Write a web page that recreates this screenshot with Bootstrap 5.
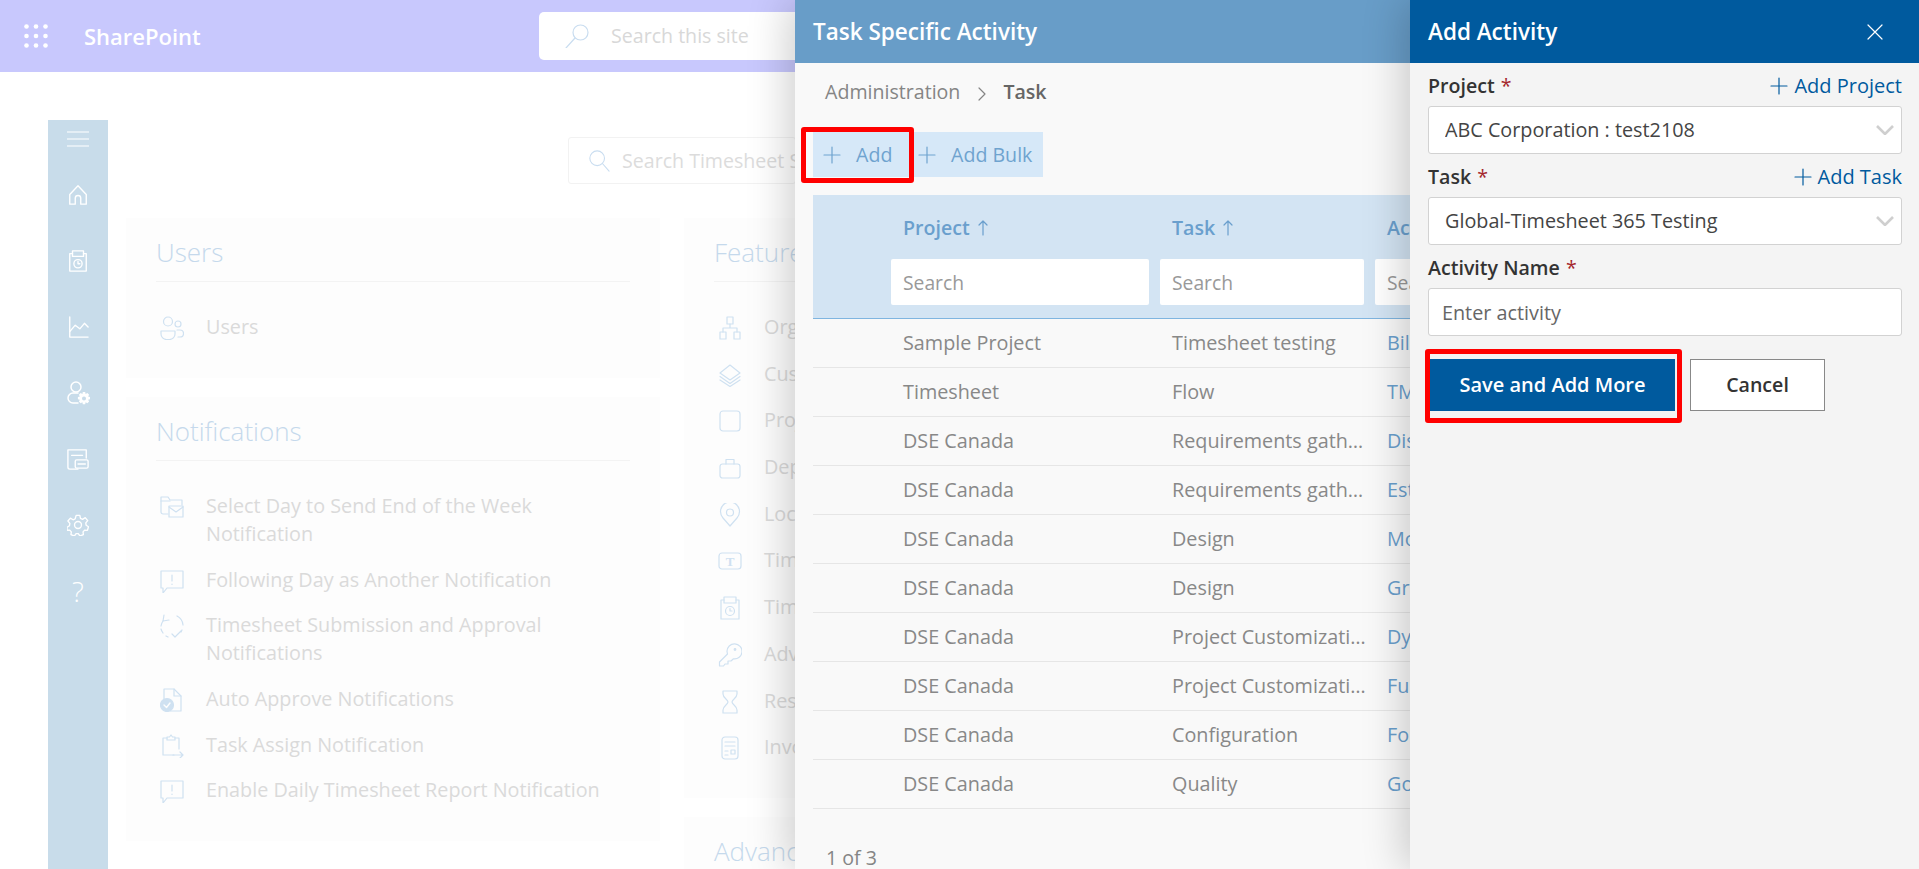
<!doctype html>
<html lang="en">
<head>
    <meta charset="utf-8">
    <meta name="viewport" content="width=device-width, initial-scale=1">
    <title>Task Specific Activity</title>
    <link href="https://cdn.jsdelivr.net/npm/bootstrap@5.3.3/dist/css/bootstrap.min.css" rel="stylesheet">
    <style>
        html, body { height: 869px; overflow: hidden; }
        body { font-family: "Open Sans", "Liberation Sans", sans-serif; font-size: 19.6px; background: #fff; position: relative; }
        svg.ico { fill: none; stroke: currentColor; stroke-width: 1.2; stroke-linecap: round; stroke-linejoin: round; flex: none; }

        /* background page */
        .top-bar { height: 72px; background: #c8c8fd; padding: 0; flex-wrap: nowrap; justify-content: flex-start; }
        .waffle { width: 24px; height: 24px; margin-left: 24px; fill: #fff; }
        .brand-name { color: #fff; font-size: 22px; font-weight: 600; margin-left: 36px; width: 455px; }
        .site-search { width: 400px; height: 48px; background: #fff; border-radius: 5px; color: #c9ddf0; padding-left: 26px; gap: 22px; }
        .site-search span { color: #d8d8d8; font-size: 19.6px; }
        .page-body { margin-left: 48px; height: 797px; overflow: hidden; }
        .side-rail { width: 60px; height: 749px; margin-top: 48px; background: #c8dcea; color: #fff; flex: none; }
        .rail-menu { height: 38px; margin-bottom: 4px; }
        .rail-item { height: 66px; }
        .rail-item svg.ico { stroke-width: 1.5; }
        .rail-q { font-size: 28px; font-weight: 300; line-height: 1; }
        .page-main { padding: 65px 0 0 18px; }
        .tool-search { width: 228px; height: 47px; margin-left: 442px; border: 1px solid #f2f2f2; border-radius: 3px; color: #c9ddf0; padding-left: 19px; gap: 12px; overflow: hidden; }
        .tool-search span { color: #dcdcdc; font-size: 19.6px; white-space: nowrap; }
        .set-cols { display: grid; grid-template-columns: 534px 534px; column-gap: 24px; margin-top: 34px; }
        .set-col { display: flex; flex-direction: column; gap: 19px; }
        .set-card { background: #fdfdfd; padding: 17px 30px 37px; }
        .set-title { font-size: 26px; font-weight: 300; line-height: 34px; color: #c5d9ec; margin: 0; padding-bottom: 12px; border-bottom: 1px solid #f3f3f3; }
        .set-list { margin-top: 31px; display: flex; flex-direction: column; gap: 17.7px; }
        .set-list.tight { gap: 18.7px; }
        .set-row { display: flex; color: #dadada; line-height: 28px; font-size: 19.8px; }
        .set-ico { width: 50px; padding-left: 4px; flex: none; color: #cfe1f1; }
        .set-ico svg { display: block; margin-top: 3px; }

        /* sliding panels */
        .panel-one, .panel-two { position: absolute; top: 0; bottom: 0; right: 0; overflow: hidden; box-shadow: -6px 0 40px rgba(0, 0, 0, .2); }
        .panel-one { left: 795px; background: #f9f9f9; }
        .panel-two { left: 1410px; background: #f4f4f4; }
        .panel-head { height: 63px; color: #fff; font-size: 22.5px; font-weight: 600; }
        .panel-one .panel-head { background: #689dc8; padding-left: 18px; }
        .panel-two .panel-head { background: #005a9e; padding: 0 36px 0 18px; }

        .crumbs { padding: 16px 0 0 30px; height: 69px; color: #858585; gap: 16.5px; line-height: 26px; }
        .crumbs b { font-weight: 600; color: #666; }
        .act-bar { margin-left: 18px; height: 45px; }
        .act-btn { height: 45px; border: 0; border-radius: 0; background: #d6e8f8; color: #6fa3cf; padding: 0 9px 0 10px; gap: 15px; font-size: 19.6px; white-space: nowrap; }
        .act-btn:hover { background: #d6e8f8; color: #6fa3cf; }
        .act-one { width: 89px; }
        .act-two { width: 141px; }
        .mark-box { position: absolute; border: 5px solid #f00; border-radius: 3px; pointer-events: none; }
        .mark-add { top: -5px; bottom: -6px; left: -12px; right: -12px; }
        .mark-save { top: -10px; bottom: -12px; left: -5px; right: -7px; }

        .task-table { width: 740px; margin: 18px 0 0 18px; table-layout: fixed; --bs-table-bg: transparent; color: #888; }
        .task-table thead th { background: #d3e4f3; border-bottom: 1px solid #7fb5e0; padding: 20px 11px 13px 0; color: #6a9fcd; font-weight: 600; font-size: 19.6px; line-height: 26px; }
        .task-table .th-label { padding-left: 12px; gap: 8px; white-space: nowrap; }
        .task-table .form-control { height: 46px; margin-top: 18px; border: 0; border-radius: 2px; padding: 0 12px; font-size: 19.3px; font-weight: 400; background: #fff; }
        .task-table .form-control::placeholder { color: #999; }
        .task-table tbody td { height: 49px; padding: 0 5px 0 12px; border-bottom: 1px solid #e6e6e6; vertical-align: middle; font-size: 19.8px; color: #888; white-space: nowrap; overflow: hidden; text-overflow: ellipsis; }
        .task-table tbody td.act-cell { color: #6a9fcd; }
        .page-count { margin: 38px 0 0 31px; color: #858585; line-height: 22px; }

        .close-x { color: #fff; }
        .add-form { padding: 11px 17px 0 18px; }
        .fld-top { height: 24px; line-height: 24px; margin-bottom: 8px; }
        .fld-label { color: #333; font-weight: 600; font-size: 19.6px; margin: 0; }
        .fld-star { color: #a4262c; font-weight: 400; margin-left: 1px; }
        .fld-add { color: #005a9e; text-decoration: none; font-size: 20px; gap: 6px; }
        .fld-box { height: 48px; border: 1px solid #d2d2d2; border-radius: 3px; font-size: 19.8px; color: #444; background-color: #fff; margin-bottom: 11px; box-shadow: none; }
        .form-select.fld-box { padding: 0 32px 0 16px; background-position: right 7px center; background-size: 18px 10px;
            background-image: url("data:image/svg+xml,%3csvg xmlns='http://www.w3.org/2000/svg' viewBox='0 0 18 10'%3e%3cpath fill='none' stroke='%23cfcfcf' stroke-width='2.6' d='M1 1l8 8 8-8'/%3e%3c/svg%3e"); }
        .form-control.fld-box { padding: 0 13px; }
        .form-control.fld-box::placeholder { color: #666; }
        .form-actions { margin: 23px 0 0 2px; gap: 15px; }
        .save-btn { width: 245px; height: 52px; background: #005a9e; border: 0; border-radius: 0; color: #fff; font-weight: 600; font-size: 20px; white-space: nowrap; padding: 0; }
        .save-btn:hover { background: #005a9e; color: #fff; }
        .cancel-btn { width: 135px; height: 52px; background: #fff; border: 1px solid #888; border-radius: 0; color: #333; font-weight: 600; font-size: 19.6px; margin-left: 0; }
        .cancel-btn:hover { background: #fff; color: #333; border-color: #888; }
    </style>
</head>
<body>
    <svg width="0" height="0" class="position-absolute">
        <symbol id="i-users" viewBox="0 0 24 24"><circle cx="8" cy="5.500" r="4.500"/><circle cx="18" cy="8" r="3"/><path d="M1 15h14v3a5.500 5.500 0 0 1-5.500 5.500h-3A5.500 5.500 0 0 1 1 18z"/><path d="M17 14h3a3.500 3.500 0 0 1 0 7h-2"/></symbol>
        <symbol id="i-org" viewBox="0 0 24 24"><rect x="9" y="1" width="6" height="7"/><rect x="2" y="16" width="6" height="7"/><rect x="16" y="16" width="6" height="7"/><path d="M12 8v4M5 16v-4h14v4"/></symbol>
        <symbol id="i-layers" viewBox="0 0 24 24"><path d="M12 2l10 8-10 7-10-7z"/><path d="M2 13.500l10 7 10-7M2 17l10 6.500L22 17"/></symbol>
        <symbol id="i-square" viewBox="0 0 24 24"><rect x="2" y="2" width="20" height="20" rx="3"/></symbol>
        <symbol id="i-case" viewBox="0 0 24 24"><rect x="2" y="8" width="20" height="14" rx="2.500"/><path d="M8 8V3.500h8V8"/></symbol>
        <symbol id="i-pin" viewBox="0 0 24 24"><path d="M12 23l-7-8a9.500 9.500 0 1 1 14 0z"/><circle cx="12" cy="9.500" r="3.500"/></symbol>
        <symbol id="i-sheet" viewBox="0 0 24 24"><path d="M6 4H3v19h18V4h-3"/><rect x="6" y="1" width="12" height="6"/><circle cx="12" cy="15" r="4.500"/><path d="M12 12.500V15h2"/></symbol>
        <symbol id="i-key" viewBox="0 0 24 24"><path d="M9 8.500a7.500 7.500 0 1 1 6.500 7.300L13 18h-3v3H7l-1.500 2H1.500v-4L9.500 11z"/><circle cx="17" cy="6.500" r=".8"/></symbol>
        <symbol id="i-hour" viewBox="0 0 24 24"><path d="M5 1h14v3c0 4-5 5.500-5 8s5 4 5 8v3H5v-3c0-4 5-5.500 5-8S5 8 5 4z"/></symbol>
        <symbol id="i-bill" viewBox="0 0 24 24"><rect x="4" y="1" width="16" height="22" rx="3"/><path d="M7 6h10M7 10h10M7 15h3M7 19h3"/><rect x="13" y="14" width="4" height="4"/></symbol>
        <symbol id="i-folder" viewBox="0 0 24 24"><path d="M8 19H3a2 2 0 0 1-2-2V2h7l2 3h12v5"/><path d="M1 6h9"/><rect x="9" y="11" width="14" height="11"/><path d="M9 12l7 5 7-5"/></symbol>
        <symbol id="i-alert" viewBox="0 0 24 24"><path d="M1 2h22v17H7l-4 5v-5H1z"/><path d="M12 6v6M12 15v.5"/></symbol>
        <symbol id="i-cycle" viewBox="0 0 24 24"><path d="M4 1l-1 6 6-1"/><path d="M3 7a11 11 0 0 0-2 5"/><path d="M1 15a11 11 0 0 0 2 4M6 22l2 1"/><path d="M17 2a11 11 0 0 1 6 9M22 16l-1 2"/><path d="M12 21l3 3 6-6" transform="translate(0 -1)"/></symbol>
        <symbol id="i-doc" viewBox="0 0 24 24"><path d="M4 12V1h10l7 7v15H10"/><path d="M14 1v7h7"/><circle cx="7" cy="17" r="6.500" fill="currentColor"/><path d="M4 17l2.500 2.500L10 15" stroke="#fdfdfd" stroke-width="1.400"/></symbol>
        <symbol id="i-clip" viewBox="0 0 24 24"><path d="M14 21H3V4h4M15 4h4v11"/><path d="M7 6V3h2.500L11 1l1.500 2H15v3z"/><path d="M13 21h10M20 18l3 3-3 3"/></symbol>
        <symbol id="i-home" viewBox="0 0 24 24"><path d="M12 2L3 11.500V22h6v-6.500a3 3 0 0 1 6 0V22h6V11.500z"/></symbol>
        <symbol id="i-chart" viewBox="0 0 24 24"><path d="M3 1v22h20"/><path d="M3 17l6-7 5 4 5-6 4 4"/></symbol>
        <symbol id="i-usergear" viewBox="0 0 24 24"><circle cx="10" cy="6" r="5"/><path d="M12 22H7a5 5 0 0 1 0-10h5"/><path fill="currentColor" stroke="none" fill-rule="evenodd" d="M16.800 11h2.400l.4 2 1.800-1 1.700 1.700-1 1.800 2 .4v2.400l-2 .4 1 1.800-1.700 1.700-1.800-1-.4 2h-2.400l-.4-2-1.800 1-1.700-1.700 1-1.800-2-.4v-2.400l2-.4-1-1.800 1.700-1.700 1.800 1zM18 15.500a2 2 0 1 0 0 4 2 2 0 0 0 0-4z"/></symbol>
        <symbol id="i-form" viewBox="0 0 24 24"><path d="M12 23H3a2 2 0 0 1-2-2V2h20v9"/><path d="M5 8h12"/><rect x="9" y="13" width="14" height="9" rx="1.500"/><path d="M12 17.500h8"/></symbol>
        <symbol id="i-gear" viewBox="0 0 24 24"><circle cx="12" cy="12" r="3.800"/><path d="M10 1.500h4l.7 3.300 2.300 1 2.900-1.800 2.700 3.200-2.100 2.500.4 2.600 2.600 1.600-1.200 3.900-3.100-.2-1.700 1.900.4 3.100-3.800 1.400-1.800-2.600h-2.400l-1.800 2.600-3.800-1.400.4-3.100-1.700-1.900-3.100.2L.1 14.400l2.600-1.600.4-2.600L1 7.700l2.700-3.200 2.900 1.800 2.300-1z"/></symbol>
    </svg>

    <nav class="navbar top-bar d-flex align-items-center">
        <svg class="waffle flex-none" viewBox="0 0 24 24"><circle cx="2.500" cy="2.500" r="2.300"/><circle cx="12" cy="2.500" r="2.300"/><circle cx="21.500" cy="2.500" r="2.300"/><circle cx="2.500" cy="12" r="2.300"/><circle cx="12" cy="12" r="2.300"/><circle cx="21.500" cy="12" r="2.300"/><circle cx="2.500" cy="21.500" r="2.300"/><circle cx="12" cy="21.500" r="2.300"/><circle cx="21.500" cy="21.500" r="2.300"/></svg>
        <div class="brand-name">SharePoint</div>
        <div class="site-search d-flex align-items-center">
            <svg class="ico" width="24" height="24" viewBox="0 0 24 24"><circle cx="15.500" cy="8.500" r="7.500"/><path d="M10 14L1 24"/></svg>
            <span>Search this site</span>
        </div>
    </nav>

    <div class="page-body d-flex">
        <aside class="side-rail d-flex flex-column align-items-center">
            <div class="rail-menu d-flex align-items-center justify-content-center">
                <svg class="ico" width="22" height="16" viewBox="0 0 22 16"><path d="M0 1h22M0 8h22M0 15h22"/></svg>
            </div>
            <div class="rail-item d-flex align-items-center"><svg class="ico" width="22" height="22"><use href="#i-home"/></svg></div>
            <div class="rail-item d-flex align-items-center"><svg class="ico" width="22" height="22"><use href="#i-sheet"/></svg></div>
            <div class="rail-item d-flex align-items-center"><svg class="ico" width="22" height="22"><use href="#i-chart"/></svg></div>
            <div class="rail-item d-flex align-items-center"><svg class="ico" width="24" height="24"><use href="#i-usergear"/></svg></div>
            <div class="rail-item d-flex align-items-center"><svg class="ico" width="22" height="22"><use href="#i-form"/></svg></div>
            <div class="rail-item d-flex align-items-center"><svg class="ico" width="22" height="22"><use href="#i-gear"/></svg></div>
            <div class="rail-item d-flex align-items-center"><span class="rail-q">?</span></div>
        </aside>

        <main class="page-main flex-grow-1">
            <div class="tool-search d-flex align-items-center">
                <svg class="ico" width="22" height="22" viewBox="0 0 24 24"><circle cx="10" cy="9" r="8"/><path d="M16 15l7 8"/></svg>
                <span>Search Timesheet Settings</span>
            </div>
            <div class="set-cols">
                <div class="set-col">
                    <section class="set-card">
                        <h2 class="set-title">Users</h2>
                        <div class="set-list">
                            <div class="set-row"><span class="set-ico"><svg class="ico" width="24" height="24"><use href="#i-users"/></svg></span><span>Users</span></div>
                        </div>
                    </section>
                    <section class="set-card">
                        <h2 class="set-title">Notifications</h2>
                        <div class="set-list">
                            <div class="set-row"><span class="set-ico"><svg class="ico" width="24" height="24"><use href="#i-folder"/></svg></span><span>Select Day to Send End of the Week<br>Notification</span></div>
                            <div class="set-row"><span class="set-ico"><svg class="ico" width="24" height="24"><use href="#i-alert"/></svg></span><span>Following Day as Another Notification</span></div>
                            <div class="set-row"><span class="set-ico"><svg class="ico" width="24" height="24"><use href="#i-cycle"/></svg></span><span>Timesheet Submission and Approval<br>Notifications</span></div>
                            <div class="set-row"><span class="set-ico"><svg class="ico" width="24" height="24"><use href="#i-doc"/></svg></span><span>Auto Approve Notifications</span></div>
                            <div class="set-row"><span class="set-ico"><svg class="ico" width="24" height="24"><use href="#i-clip"/></svg></span><span>Task Assign Notification</span></div>
                            <div class="set-row"><span class="set-ico"><svg class="ico" width="24" height="24"><use href="#i-alert"/></svg></span><span>Enable Daily Timesheet Report Notification</span></div>
                        </div>
                    </section>
                </div>
                <div class="set-col">
                    <section class="set-card">
                        <h2 class="set-title">Features</h2>
                        <div class="set-list tight">
                            <div class="set-row"><span class="set-ico"><svg class="ico" width="24" height="24"><use href="#i-org"/></svg></span><span>Organization</span></div>
                            <div class="set-row"><span class="set-ico"><svg class="ico" width="24" height="24"><use href="#i-layers"/></svg></span><span>Customer</span></div>
                            <div class="set-row"><span class="set-ico"><svg class="ico" width="24" height="24"><use href="#i-square"/></svg></span><span>Project</span></div>
                            <div class="set-row"><span class="set-ico"><svg class="ico" width="24" height="24"><use href="#i-case"/></svg></span><span>Department</span></div>
                            <div class="set-row"><span class="set-ico"><svg class="ico" width="24" height="24"><use href="#i-pin"/></svg></span><span>Location</span></div>
                            <div class="set-row"><span class="set-ico"><svg class="ico" width="24" height="24" viewBox="0 0 24 24"><rect x="1" y="4" width="22" height="16" rx="3"/><text x="12" y="17" text-anchor="middle" font-family="Liberation Serif, serif" font-size="13" font-weight="700" fill="currentColor" stroke="none">T</text></svg></span><span>Timesheet Type</span></div>
                            <div class="set-row"><span class="set-ico"><svg class="ico" width="24" height="24"><use href="#i-sheet"/></svg></span><span>Timesheet</span></div>
                            <div class="set-row"><span class="set-ico"><svg class="ico" width="24" height="24"><use href="#i-key"/></svg></span><span>Advanced</span></div>
                            <div class="set-row"><span class="set-ico"><svg class="ico" width="24" height="24"><use href="#i-hour"/></svg></span><span>Restrict</span></div>
                            <div class="set-row"><span class="set-ico"><svg class="ico" width="24" height="24"><use href="#i-bill"/></svg></span><span>Invoice</span></div>
                        </div>
                    </section>
                    <section class="set-card">
                        <h2 class="set-title">Advanced</h2>
                    </section>
                </div>
            </div>
        </main>
    </div>

    <div class="panel-one">
        <div class="panel-head d-flex align-items-center">Task Specific Activity</div>
        <div class="crumbs d-flex align-items-start">
            <span>Administration</span>
            <svg class="ico mt-2" width="10" height="14" viewBox="0 0 10 14"><path d="M2 1l6 6-6 6"/></svg>
            <b>Task</b>
        </div>
        <div class="act-bar d-flex">
            <div class="position-relative">
                <button class="btn act-btn act-one d-flex align-items-center" type="button">
                    <svg class="ico" width="18" height="18" viewBox="0 0 18 18"><path d="M9 1v16M1 9h16"/></svg>Add
                </button>
                <div class="mark-box mark-add"></div>
            </div>
            <button class="btn act-btn act-two d-flex align-items-center ps-3" type="button">
                <svg class="ico" width="18" height="18" viewBox="0 0 18 18"><path d="M9 1v16M1 9h16"/></svg>Add Bulk
            </button>
        </div>

        <table class="table task-table mb-0">
            <colgroup><col style="width:78px"><col style="width:269px"><col style="width:215px"><col></colgroup>
            <thead>
                <tr>
                    <th></th>
                    <th><div class="th-label d-flex align-items-center">Project <svg class="ico" width="10" height="16" viewBox="0 0 10 16"><path d="M5 15V1M1 5l4-4 4 4"/></svg></div><input class="form-control" placeholder="Search"></th>
                    <th><div class="th-label d-flex align-items-center">Task <svg class="ico" width="10" height="16" viewBox="0 0 10 16"><path d="M5 15V1M1 5l4-4 4 4"/></svg></div><input class="form-control" placeholder="Search"></th>
                    <th><div class="th-label d-flex align-items-center">Activity Name</div><input class="form-control" placeholder="Search"></th>
                </tr>
            </thead>
            <tbody id="taskRows"></tbody>
        </table>
        <div class="page-count">1 of 3</div>
    </div>

    <div class="panel-two">
        <div class="panel-head d-flex align-items-center justify-content-between">
            <span>Add Activity</span>
            <svg class="ico close-x" width="16" height="16" viewBox="0 0 16 16"><path d="M1 1l14 14M15 1L1 15"/></svg>
        </div>
        <form class="add-form">
            <div class="fld-top d-flex justify-content-between align-items-center">
                <label class="fld-label">Project <span class="fld-star">*</span></label>
                <a href="#" class="fld-add d-flex align-items-center"><svg class="ico" width="18" height="18" viewBox="0 0 18 18"><path d="M9 1v16M1 9h16"/></svg>Add Project</a>
            </div>
            <select class="form-select fld-box"><option>ABC Corporation : test2108</option></select>
            <div class="fld-top d-flex justify-content-between align-items-center">
                <label class="fld-label">Task <span class="fld-star">*</span></label>
                <a href="#" class="fld-add d-flex align-items-center"><svg class="ico" width="18" height="18" viewBox="0 0 18 18"><path d="M9 1v16M1 9h16"/></svg>Add Task</a>
            </div>
            <select class="form-select fld-box"><option>Global-Timesheet 365 Testing</option></select>
            <div class="fld-top d-flex align-items-center">
                <label class="fld-label">Activity Name <span class="fld-star">*</span></label>
            </div>
            <input class="form-control fld-box mb-0" placeholder="Enter activity">
            <div class="form-actions d-flex">
                <div class="position-relative">
                    <button class="btn save-btn" type="button">Save and Add More</button>
                    <div class="mark-box mark-save"></div>
                </div>
                <button class="btn cancel-btn" type="button">Cancel</button>
            </div>
        </form>
    </div>

    <script src="https://cdn.jsdelivr.net/npm/bootstrap@5.3.3/dist/js/bootstrap.bundle.min.js"></script>
    <script>
        // rows of the activity grid
        const rows = [
            ['Sample Project', 'Timesheet testing', 'Billable'],
            ['Timesheet', 'Flow', 'TM'],
            ['DSE Canada', 'Requirements gathering', 'Discussion'],
            ['DSE Canada', 'Requirements gathering', 'Estimation'],
            ['DSE Canada', 'Design', 'Mockups'],
            ['DSE Canada', 'Design', 'Graphics'],
            ['DSE Canada', 'Project Customization', 'Dynamic'],
            ['DSE Canada', 'Project Customization', 'Functional'],
            ['DSE Canada', 'Configuration', 'Forms'],
            ['DSE Canada', 'Quality', 'Go Live']
        ];
        document.getElementById('taskRows').innerHTML = rows.map(r =>
            `<tr><td></td><td>${r[0]}</td><td>${r[1]}</td><td class="act-cell">${r[2]}</td></tr>`
        ).join('');
    </script>
</body>
</html>
